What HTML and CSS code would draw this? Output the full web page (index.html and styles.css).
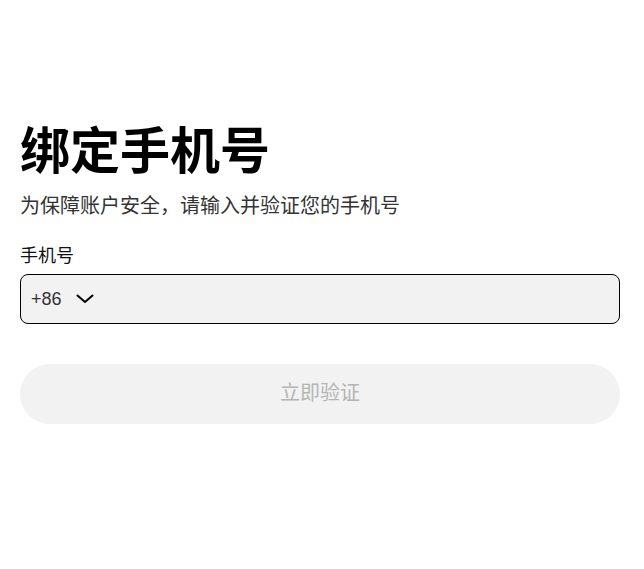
FILE: index.html
```html
<!DOCTYPE html>
<html lang="zh-CN">
<head>
<meta charset="utf-8">
<title>绑定手机号</title>
<link rel="stylesheet" href="styles.css">
</head>
<body>
<main class="page">
  <h1 class="title">绑定手机号</h1>
  <p class="subtitle">为保障账户安全，请输入并验证您的手机号</p>
  <label class="label">手机号</label>
  <div class="field">
    <span class="code">+86</span>
    <svg class="chevron" width="18" height="10" viewBox="0 0 18 10" aria-hidden="true">
      <path d="M1.5 1.5 L9 8 L16.5 1.5" fill="none" stroke="#000" stroke-width="2" stroke-linecap="round" stroke-linejoin="round"/>
    </svg>
    <input class="input" type="tel" aria-label="手机号">
  </div>
  <button class="submit" type="button">立即验证</button>
</main>
</body>
</html>
```
FILE: styles.css
```css
html, body {
  margin: 0;
  padding: 0;
  background: #fff;
}
body {
  font-family: "Noto Sans CJK SC", "Noto Sans", "Liberation Sans", sans-serif;
  color: #000;
}
.page {
  width: 600px;
  padding: 117px 20px 0;
  display: flex;
  flex-direction: column;
}
.title {
  margin: 0;
  font-size: 50px;
  line-height: 60px;
  font-weight: 700;
  color: #000;
}
.subtitle {
  margin: 14px 0 0;
  font-size: 20px;
  line-height: 28px;
  color: #333;
}
.label {
  margin-top: 23px;
  font-size: 18px;
  line-height: 24px;
  color: #111;
}
.field {
  margin-top: 8px;
  box-sizing: border-box;
  height: 50px;
  border: 1px solid #000;
  border-radius: 8px;
  background: #f2f2f2;
  display: flex;
  align-items: center;
  padding-left: 10px;
}
.code {
  font-family: "Liberation Sans", "Noto Sans CJK SC", sans-serif;
  font-size: 18px;
  color: #333;
}
.chevron {
  margin-left: 14px;
  flex: none;
}
.input {
  flex: 1;
  border: 0;
  background: transparent;
  outline: none;
  height: 100%;
  font-size: 17px;
}
.submit {
  margin-top: 40px;
  height: 60px;
  padding: 0 0 6px;
  border: 0;
  border-radius: 30px;
  background: #f2f2f2;
  color: #b5b5b5;
  font-family: "Noto Sans CJK SC", sans-serif;
  font-size: 20px;
  cursor: default;
}
```
